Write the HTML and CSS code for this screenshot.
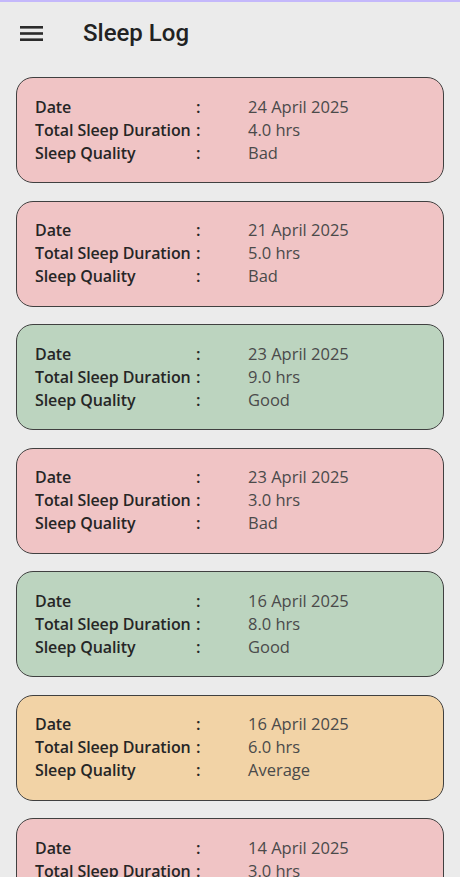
FILE: index.html
```html
<!DOCTYPE html>
<html>
<head>
	<title>Sleep Log</title>
	<link rel="stylesheet" href="styles.css">
</head>
<body>
	<div class="topline"></div>
	<div class="header">
		<svg class="menu" width="24" height="18" viewBox="0 0 24 18">
			<rect x="0" y="2" width="23" height="2.6" fill="#2b2b2b"/>
			<rect x="0" y="8.2" width="23" height="2.6" fill="#2b2b2b"/>
			<rect x="0" y="14.4" width="23" height="2.6" fill="#2b2b2b"/>
		</svg>
		<h1>Sleep Log</h1>
	</div>
	<div class="list">
		<div class="card bad">
			<div class="row"><span class="lbl">Date</span><span class="col">:</span><span class="val">24 April 2025</span></div>
			<div class="row"><span class="lbl">Total Sleep Duration</span><span class="col">:</span><span class="val">4.0 hrs</span></div>
			<div class="row"><span class="lbl">Sleep Quality</span><span class="col">:</span><span class="val">Bad</span></div>
		</div>
		<div class="card bad">
			<div class="row"><span class="lbl">Date</span><span class="col">:</span><span class="val">21 April 2025</span></div>
			<div class="row"><span class="lbl">Total Sleep Duration</span><span class="col">:</span><span class="val">5.0 hrs</span></div>
			<div class="row"><span class="lbl">Sleep Quality</span><span class="col">:</span><span class="val">Bad</span></div>
		</div>
		<div class="card good">
			<div class="row"><span class="lbl">Date</span><span class="col">:</span><span class="val">23 April 2025</span></div>
			<div class="row"><span class="lbl">Total Sleep Duration</span><span class="col">:</span><span class="val">9.0 hrs</span></div>
			<div class="row"><span class="lbl">Sleep Quality</span><span class="col">:</span><span class="val">Good</span></div>
		</div>
		<div class="card bad">
			<div class="row"><span class="lbl">Date</span><span class="col">:</span><span class="val">23 April 2025</span></div>
			<div class="row"><span class="lbl">Total Sleep Duration</span><span class="col">:</span><span class="val">3.0 hrs</span></div>
			<div class="row"><span class="lbl">Sleep Quality</span><span class="col">:</span><span class="val">Bad</span></div>
		</div>
		<div class="card good">
			<div class="row"><span class="lbl">Date</span><span class="col">:</span><span class="val">16 April 2025</span></div>
			<div class="row"><span class="lbl">Total Sleep Duration</span><span class="col">:</span><span class="val">8.0 hrs</span></div>
			<div class="row"><span class="lbl">Sleep Quality</span><span class="col">:</span><span class="val">Good</span></div>
		</div>
		<div class="card average">
			<div class="row"><span class="lbl">Date</span><span class="col">:</span><span class="val">16 April 2025</span></div>
			<div class="row"><span class="lbl">Total Sleep Duration</span><span class="col">:</span><span class="val">6.0 hrs</span></div>
			<div class="row"><span class="lbl">Sleep Quality</span><span class="col">:</span><span class="val">Average</span></div>
		</div>
		<div class="card bad">
			<div class="row"><span class="lbl">Date</span><span class="col">:</span><span class="val">14 April 2025</span></div>
			<div class="row"><span class="lbl">Total Sleep Duration</span><span class="col">:</span><span class="val">3.0 hrs</span></div>
			<div class="row"><span class="lbl">Sleep Quality</span><span class="col">:</span><span class="val">Bad</span></div>
		</div>
	</div>
</body>
</html>
```

FILE: styles.css
```css
html, body {
	margin: 0;
	padding: 0;
	height: 100%;
	overflow: hidden;
}
body {
	background-color: #ebebeb;
	font-family: "Open Sans", sans-serif;
}
.topline {
	height: 2px;
	background-color: #c4b8fb;
}
.header {
	display: flex;
	align-items: center;
	height: 66px;
	padding-left: 20px;
	margin-top: -2px;
}
.menu {
	display: block;
}
.header h1 {
	margin: 0 0 0 39px;
	font-family: Roboto, sans-serif;
	font-weight: 500;
	font-size: 24px;
	color: #222;
}
.list {
	display: flex;
	flex-direction: column;
	gap: 17.5px;
	padding: 11px 16px 0 16px;
}
.card {
	border: 1.8px solid #404040;
	border-radius: 17px;
	padding: 16.5px 18px 18.5px 18px;
	min-height: 69px;
}
.bad {
	background-color: #f0c4c5;
}
.good {
	background-color: #bcd4bf;
}
.average {
	background-color: #f2d3a6;
}
.row {
	display: flex;
	align-items: baseline;
	height: 23px;
	line-height: 23px;
	font-size: 16.5px;
}
.lbl {
	width: 161px;
	font-size: 16px;
	font-weight: 600;
	color: #262626;
	white-space: nowrap;
	letter-spacing: -0.1px;
}
.col {
	width: 52px;
	font-weight: 600;
	color: #262626;
}
.val {
	color: #4a4a4a;
}
```
